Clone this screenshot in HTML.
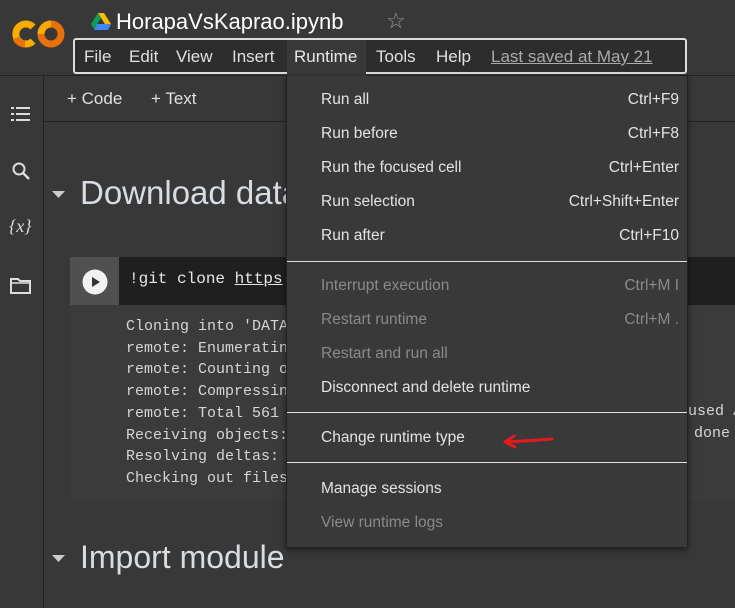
<html><head><style>
body{margin:0;width:735px;height:608px;background:#383838;position:relative;overflow:hidden;font-family:"Liberation Sans",sans-serif;color:#e8e8e8}
.a{position:absolute;white-space:nowrap}
.mono{font-family:"Liberation Mono",monospace;font-size:15px;color:#d5d5d5}
.mi{position:absolute;left:34px;font-size:15.5px;color:#e3e3e3}
.sc{position:absolute;right:8px;font-size:15.5px;color:#e3e3e3}
.dis{color:#8a8a8a}
.sep{position:absolute;left:0;right:0;height:1px;background:#e0e0e0}
</style></head><body>
<!-- logo -->
<svg class="a" style="left:12px;top:18px" width="54" height="32" viewBox="0 0 54 32"><path d="M21 9 A10 10 0 1 0 21 23" fill="none" stroke="#f9ab00" stroke-width="7"/><path d="M13 26 A10 10 0 0 1 4 20" fill="none" stroke="#e8710a" stroke-width="7"/><circle cx="39" cy="16" r="10" fill="none" stroke="#e8710a" stroke-width="7"/><path d="M39 6 A10 10 0 0 0 29 16" fill="none" stroke="#f9ab00" stroke-width="7"/></svg>
<svg class="a" style="left:91px;top:13px" width="20" height="17" viewBox="0 0 20 17"><polygon points="7,0 13,0 20,11 17,16" fill="#fbbc04"/><polygon points="7,0 0,11 3,16 10,5" fill="#0f9d58"/><polygon points="3,17 17,17 20,11 6,11" fill="#4285f4"/></svg>
<div class="a" style="left:116px;top:9px;font-size:22px;color:#fff">HorapaVsKaprao.ipynb</div>
<div class="a" style="left:386px;top:8px;font-size:22px;color:#999">☆</div>
<div class="a" style="left:73px;top:38px;width:610px;height:32px;border:2px solid #ddd;border-radius:3px;background:#2d2d2d"></div>
<div class="a" style="left:84px;top:47px;font-size:17px;color:#e0e0e0">File</div>
<div class="a" style="left:129px;top:47px;font-size:17px;color:#e0e0e0">Edit</div>
<div class="a" style="left:176px;top:47px;font-size:17px;color:#e0e0e0">View</div>
<div class="a" style="left:232px;top:47px;font-size:17px;color:#e0e0e0">Insert</div>
<div class="a" style="left:376px;top:47px;font-size:17px;color:#e0e0e0">Tools</div>
<div class="a" style="left:436px;top:47px;font-size:17px;color:#e0e0e0">Help</div>
<div class="a" style="left:491px;top:47px;font-size:17px;color:#aaa;text-decoration:underline">Last saved at May 21</div>
<div class="a" style="left:0;top:75px;width:735px;height:1px;background:#222"></div>
<div class="a" style="left:43px;top:76px;width:1px;height:532px;background:#222"></div>
<div class="a" style="left:44px;top:121px;width:691px;height:1px;background:#222"></div>
<div class="a" style="left:67px;top:89px;font-size:17px;color:#e0e0e0">+ Code</div>
<div class="a" style="left:151px;top:89px;font-size:17px;color:#e0e0e0">+ Text</div>
<!-- sidebar icons -->
<svg class="a" style="left:11px;top:106px" width="20" height="16"><g fill="#ddd"><rect x="0" y="1" width="3" height="2"/><rect x="5" y="1" width="14" height="2"/><rect x="0" y="7" width="3" height="2"/><rect x="5" y="7" width="14" height="2"/><rect x="0" y="13" width="3" height="2"/><rect x="5" y="13" width="14" height="2"/></g></svg>
<svg class="a" style="left:11px;top:161px" width="20" height="20"><circle cx="8" cy="8" r="5.5" stroke="#ddd" stroke-width="2" fill="none"/><line x1="12" y1="12" x2="18" y2="18" stroke="#ddd" stroke-width="2.5"/></svg>
<div class="a" style="left:9px;top:216px;font-size:18px;font-family:'Liberation Serif',serif;font-style:italic;color:#ddd">{<i>x</i>}</div>
<svg class="a" style="left:10px;top:277px" width="22" height="18"><path d="M1 2h7l2 2h10v12H1z" fill="none" stroke="#ddd" stroke-width="2"/><line x1="1" y1="6" x2="21" y2="6" stroke="#ddd" stroke-width="1.5"/></svg>
<!-- headings -->
<svg class="a" style="left:52px;top:191px" width="14" height="9"><polygon points="0,0 13,0 6.5,7" fill="#ccc"/></svg>
<div class="a" style="left:80px;top:174px;font-size:33px;color:#d8dde3">Download data</div>
<svg class="a" style="left:52px;top:555px" width="14" height="9"><polygon points="0,0 13,0 6.5,7" fill="#ccc"/></svg>
<div class="a" style="left:80px;top:539px;font-size:32px;color:#d8dde3">Import module</div>
<!-- cell -->
<div class="a" style="left:70px;top:257px;width:49px;height:48px;background:#505050"></div>
<div class="a" style="left:119px;top:257px;width:616px;height:48px;background:#1f1f1f"></div>
<div class="a" style="left:70px;top:305px;width:665px;height:195px;background:#3b3b3b"></div>
<svg class="a" style="left:82px;top:269px" width="26" height="26"><circle cx="13" cy="13" r="12.5" fill="#f2f2f2"/><polygon points="10,8 10,18 18,13" fill="#333"/></svg>
<div class="a mono" style="left:129px;top:270px;font-size:16px;color:#e6e6e6">!git clone <u>https</u></div>
<div class="a mono" style="left:126px;top:316px;line-height:21.7px">Cloning into 'DATASET'...<br>remote: Enumerating objects<br>remote: Counting objects<br>remote: Compressing objects<br>remote: Total 561 (delta 0), reused<br>Receiving objects: 100%<br>Resolving deltas: 100%<br>Checking out files: 100%</div>
<div class="a mono" style="left:688px;top:403px;background:#3b3b3b;width:60px">used ▲</div>
<div class="a mono" style="left:694px;top:425px;background:#3b3b3b;width:50px">done</div>
<!-- menu -->
<div class="a" style="left:287px;top:40px;width:79px;height:40px;background:#393939"></div>
<div class="a" style="left:294px;top:47px;font-size:17px;color:#e8e8e8">Runtime</div>
<div class="a" style="left:286px;top:76px;width:400px;height:471px;background:#393939;border:1px solid #222;border-top:none;box-shadow:0 2px 6px rgba(0,0,0,.5)">
<div class="mi" style="top:15px">Run all</div><div class="sc" style="top:15px">Ctrl+F9</div>
<div class="mi" style="top:49px">Run before</div><div class="sc" style="top:49px">Ctrl+F8</div>
<div class="mi" style="top:83px">Run the focused cell</div><div class="sc" style="top:83px">Ctrl+Enter</div>
<div class="mi" style="top:117px">Run selection</div><div class="sc" style="top:117px">Ctrl+Shift+Enter</div>
<div class="mi" style="top:151px">Run after</div><div class="sc" style="top:151px">Ctrl+F10</div>
<div class="sep" style="top:185px"></div>
<div class="mi dis" style="top:201px">Interrupt execution</div><div class="sc dis" style="top:201px">Ctrl+M I</div>
<div class="mi dis" style="top:235px">Restart runtime</div><div class="sc dis" style="top:235px">Ctrl+M .</div>
<div class="mi dis" style="top:269px">Restart and run all</div>
<div class="mi" style="top:303px">Disconnect and delete runtime</div>
<div class="sep" style="top:336px"></div>
<div class="mi" style="top:353px">Change runtime type</div>
<div class="sep" style="top:386px"></div>
<div class="mi" style="top:404px">Manage sessions</div>
<div class="mi dis" style="top:438px">View runtime logs</div>
</div>
<svg class="a" style="left:500px;top:430px" width="55" height="22"><path d="M52 9 L38 10 L22 11 L5 12 M5 12 L14 6 M5 12 L15 17" stroke="#e41b1b" stroke-width="3" fill="none" stroke-linecap="round"/></svg>
</body></html>
